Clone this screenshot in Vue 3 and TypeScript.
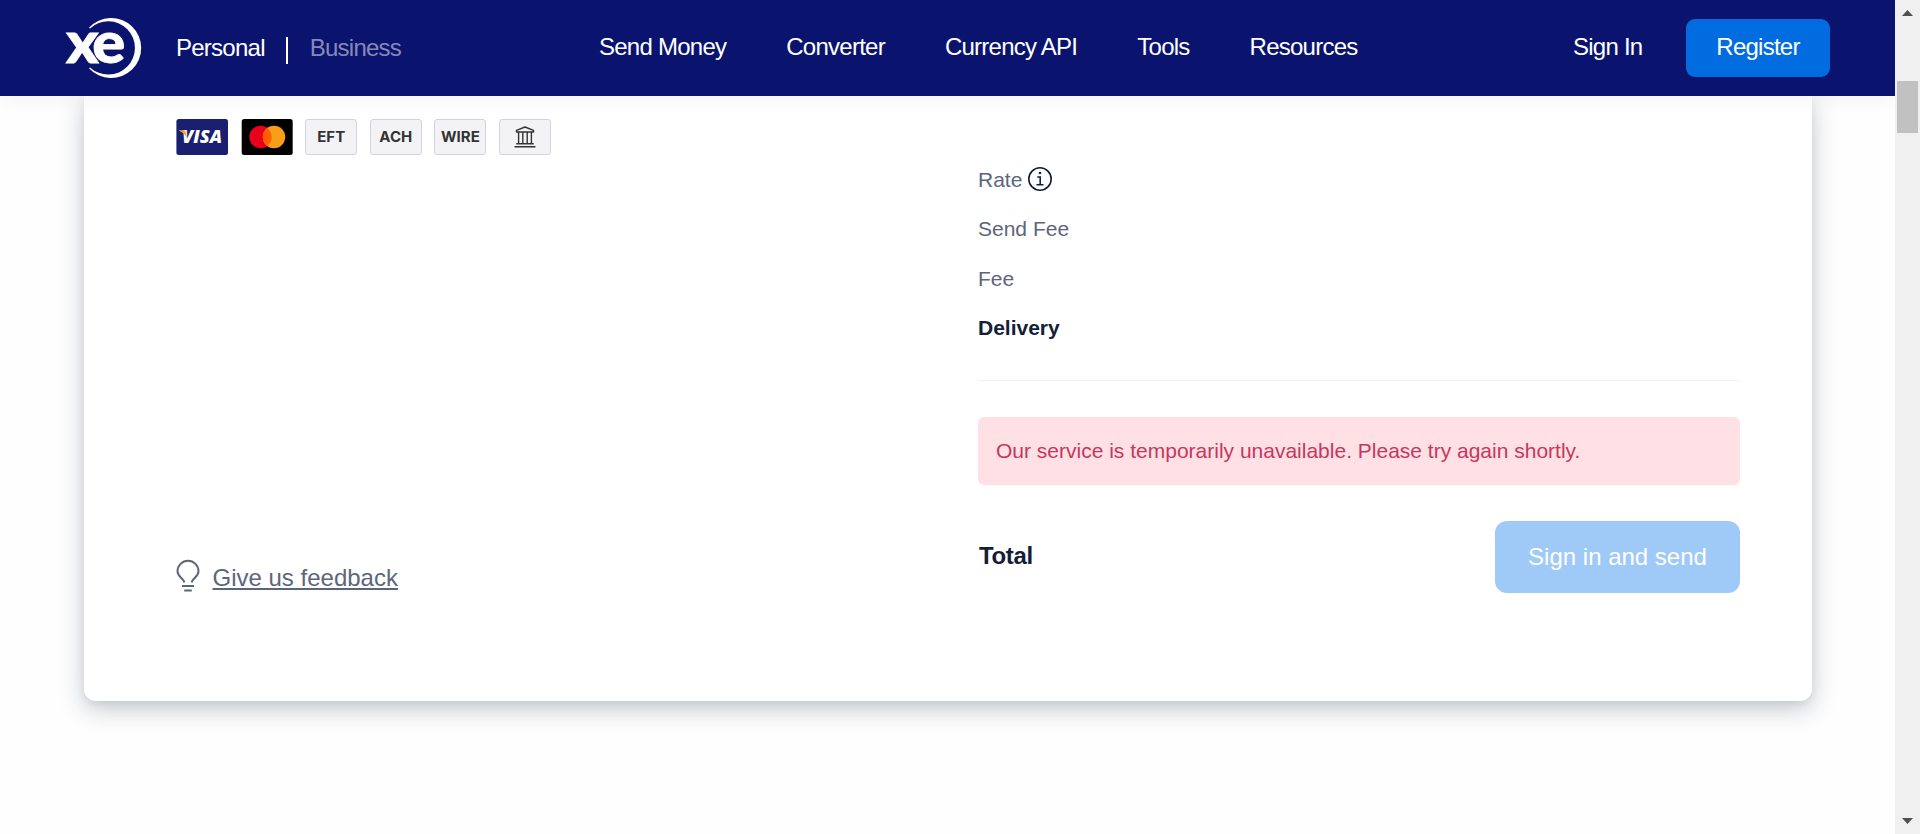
<script setup lang="ts">
const navItems: string[] = ['Send Money', 'Converter', 'Currency API', 'Tools', 'Resources']
const methods: string[] = ['EFT', 'ACH', 'WIRE']
</script>

<template>
  <div class="window">
    <div class="page">
      <header class="header">
        <svg class="logo" width="80" height="64" viewBox="64 16 80 64" role="img" aria-label="xe">
          <path d="M89 27.800A30 30 0 1 1 89 68.200L90 67.400A26.700 26.700 0 1 0 90 28.400Z" fill="#fff" />
          <text class="logo-text" transform="scale(1.08 1)" x="61 85.400" y="62.600">xe</text>
        </svg>
        <div class="audience">
          <a class="current">Personal</a>
          <span class="rule"></span>
          <a class="muted">Business</a>
        </div>
        <nav class="nav">
          <a v-for="item in navItems" :key="item">{{ item }}</a>
        </nav>
        <a class="signin">Sign In</a>
        <button class="register">Register</button>
      </header>

      <main class="card">
        <section class="left">
          <div class="methods">
            <svg width="52" height="36" viewBox="0 0 52 36">
              <rect x=".4" width="51.6" height="36" rx="2.5" fill="#1a1f71" />
              <text class="visa" x="6" y="24.200" textLength="40" lengthAdjust="spacingAndGlyphs">VISA</text>
              <path d="M3 11.200h4.600q1.700 0 2.100 1.600l1.400 7Q8.500 13.500 3 11.700z" fill="#f7a823" />
            </svg>
            <svg width="52" height="36" viewBox="0 0 52 36">
              <rect x=".7" width="51" height="36" rx="2.5" fill="#000" />
              <circle cx="19.500" cy="18" r="11.2" fill="#eb001b" />
              <circle cx="33" cy="18" r="11.2" fill="#f79e1b" />
              <path d="M26.200 9.100a11.200 11.200 0 0 1 0 17.800a11.200 11.200 0 0 1 0-17.800z" fill="#ff5f00" />
            </svg>
            <span v-for="m in methods" :key="m" class="method">{{ m }}</span>
            <span class="method">
              <svg width="22" height="22" viewBox="0 0 22 22" fill="none" stroke="#333" stroke-width="1.4">
                <path d="M2.500 6V4.300L11 1l8.500 3.300V6z" stroke-linejoin="round" />
                <path d="M4.600 6v11.500M8.800 6v11.500M13.200 6v11.500M17.400 6v11.500M2.300 17.700h17.400M.5 20.800h21" />
              </svg>
            </span>
          </div>
          <a class="feedback">
            <svg width="24" height="34" viewBox="0 0 24 34" fill="none" stroke="#5c667b" stroke-width="2">
              <path d="M8.300 23.500C7.500 19 1.500 18 1.500 12.300a10.500 10.500 0 0 1 21 0C22.500 18 16.500 19 15.700 23.500" />
              <path d="M6 27h12M8.200 31.500h7.600" />
            </svg>
            <span>Give us feedback</span>
          </a>
        </section>

        <section class="right">
          <div class="row">
            Rate
            <svg class="info" width="26" height="26" viewBox="0 0 26 26" fill="none" stroke="#141e37" stroke-width="1.6">
              <circle cx="13" cy="13" r="11.2" />
              <path d="M10.200 11h3v7.500M9.500 18.700h7" />
              <circle cx="13" cy="7" r="1.300" fill="#141e37" stroke="none" />
            </svg>
          </div>
          <div class="row">Send Fee</div>
          <div class="row">Fee</div>
          <div class="row strong">Delivery</div>
          <hr class="line" />
          <div class="alert">Our service is temporarily unavailable. Please try again shortly.</div>
          <div class="total">
            <span class="total-label">Total</span>
            <button class="send" disabled>Sign in and send</button>
          </div>
        </section>
      </main>
    </div>

    <div class="scrollbar">
      <svg width="11" height="6" viewBox="0 0 11 6"><path d="M0 6L5.500 0L11 6z" fill="#505050" /></svg>
      <div class="thumb"></div>
      <svg class="down" width="11" height="6" viewBox="0 0 11 6"><path d="M0 0h11L5.500 6z" fill="#505050" /></svg>
    </div>
  </div>
</template>

<style>
body {
  margin: 0;
  overflow: hidden;
}
</style>

<style scoped>
.window {
  display: flex;
  height: 834px;
  overflow: hidden;
  font-family: "Liberation Sans", Arial, sans-serif;
  font-size: 24px;
  line-height: 36px;
  background: #fefefe;
}
.page {
  width: 1895px;
  flex: none;
  overflow: hidden;
}
.header {
  position: relative;
  z-index: 2;
  display: flex;
  align-items: center;
  box-sizing: border-box;
  height: 96px;
  padding: 0 65px 2px 64px;
  background: #0a146e;
  color: #fff;
  letter-spacing: -0.75px;
  white-space: nowrap;
  box-shadow: 0 6px 16px rgba(0, 0, 0, 0.04);
}
.logo {
  flex: none;
  margin-top: 2px;
  overflow: visible;
}
.logo-text {
  font-family: Lato, sans-serif;
  font-weight: 900;
  font-size: 57px;
  letter-spacing: 0;
  fill: #fff;
  stroke: #fff;
  stroke-width: 0.8;
}
.audience {
  display: flex;
  align-items: center;
  width: 423px;
  margin-left: 32px;
  padding-top: 2px;
}
.rule {
  width: 2px;
  height: 27px;
  margin: 5px 22px 0 21px;
  background: #fff;
}
.muted {
  color: #8589b7;
}
.nav {
  display: flex;
  gap: 60px;
  width: 974px;
}
.register {
  width: 144px;
  height: 58px;
  margin: 2px 0 0 auto;
  padding: 0 0 2px;
  border: 0;
  border-radius: 9px;
  background: #006ce0;
  color: #fff;
  font: inherit;
  letter-spacing: inherit;
}
.card {
  display: grid;
  grid-template-columns: 802px 762px;
  box-sizing: border-box;
  width: 1728px;
  height: 605px;
  margin-left: 84px;
  padding: 0 72px 0 92px;
  border-radius: 0 0 12px 12px;
  background: #fff;
  box-shadow: 0 8px 24px rgba(20, 40, 60, 0.25), 0 3px 8px rgba(20, 40, 60, 0.05);
}
.left {
  display: flex;
  flex-direction: column;
}
.methods {
  display: flex;
  gap: 12.6px;
  padding-top: 23px;
}
.method {
  display: flex;
  align-items: center;
  justify-content: center;
  box-sizing: border-box;
  width: 52px;
  height: 36px;
  border: 1px solid #d0d4dd;
  border-radius: 3px;
  background: #f3f3f5;
  color: #333;
  font: 700 15px/36px Inter, sans-serif;
}
.visa {
  font: italic 800 17.5px "Open Sans", sans-serif;
  fill: #fff;
}
.feedback {
  display: flex;
  align-items: flex-start;
  gap: 12.5px;
  margin-top: 400px;
  padding-top: 5px;
  color: #5c667b;
}
.feedback svg {
  margin-top: -1px;
}
.feedback span {
  text-decoration: underline;
  text-decoration-thickness: 2px;
  text-underline-offset: 2px;
}
.right {
  padding-top: 67.5px;
  font-size: 21px;
  line-height: 31.500px;
}
.row {
  display: flex;
  align-items: center;
  height: 31.500px;
  margin-bottom: 18px;
  color: #5c667b;
}
.info {
  margin-left: 5px;
  margin-top: -1px;
}
.strong {
  color: #141e37;
  font-weight: 700;
}
.line {
  height: 1px;
  margin: 36px 0 36px;
  border: 0;
  background: #f0f0f2;
}
.alert {
  box-sizing: border-box;
  height: 68px;
  padding: 18px;
  border-radius: 6px;
  background: #ffe1e5;
  color: #c9365d;
}
.total {
  display: flex;
  align-items: center;
  justify-content: space-between;
  margin-top: 36px;
}
.total-label {
  margin-left: 1px;
  padding-bottom: 2px;
  color: #141e37;
  font-size: 24px;
  font-weight: 700;
  letter-spacing: -0.35px;
}
.send {
  width: 245px;
  height: 72px;
  padding: 0;
  border: 0;
  border-radius: 12px;
  background: #9fc9f7;
  color: #fff;
  font: inherit;
  font-size: 24px;
}
.scrollbar {
  display: flex;
  flex-direction: column;
  align-items: center;
  box-sizing: border-box;
  width: 25px;
  height: 834px;
  padding: 10px 0;
  background: #f0f0f0;
}
.thumb {
  width: 21px;
  height: 52px;
  margin-top: 65px;
  background: #c1c1c1;
}
.down {
  margin-top: auto;
}
</style>
